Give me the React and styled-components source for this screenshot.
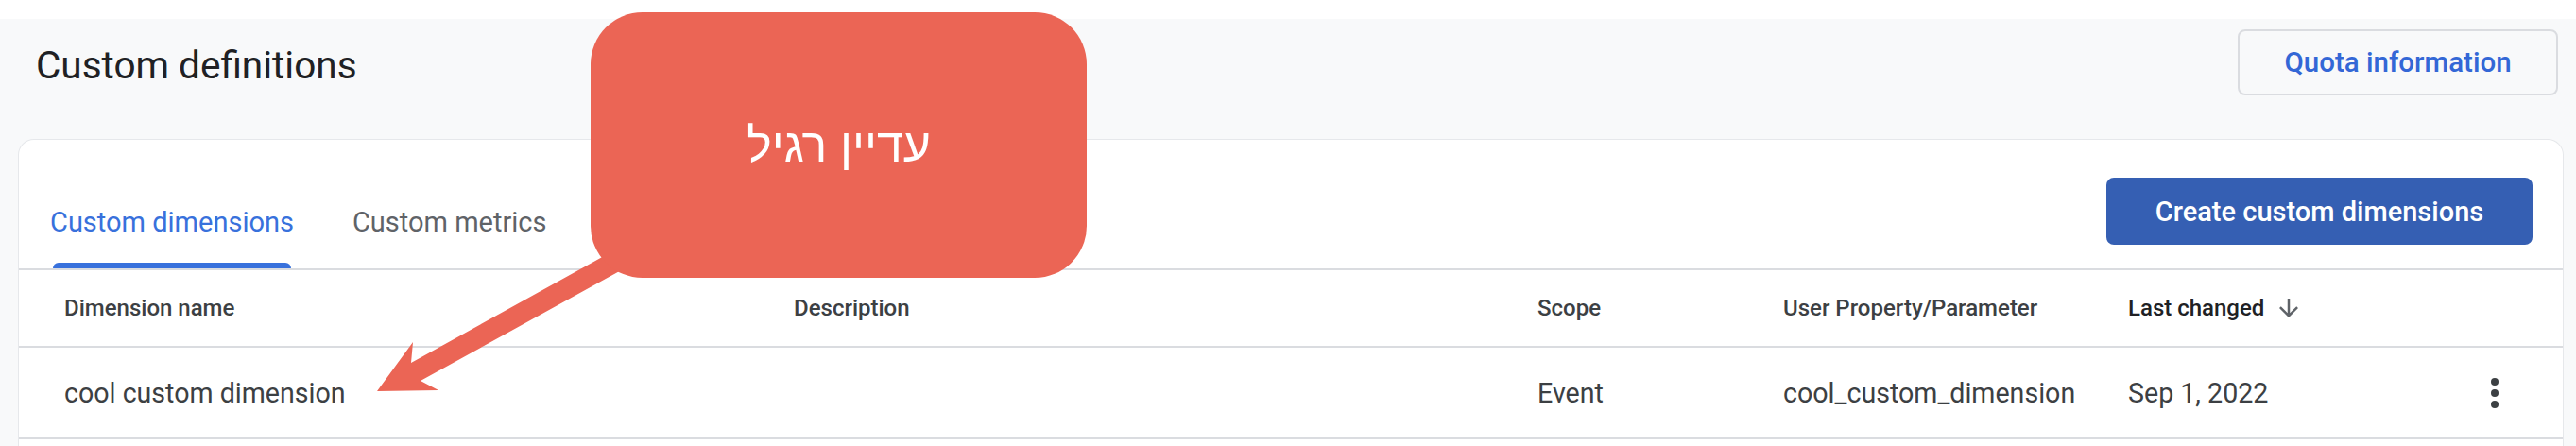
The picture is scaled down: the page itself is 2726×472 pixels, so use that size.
import React from 'react'
import styled, { createGlobalStyle } from 'styled-components'

const GlobalStyle = createGlobalStyle`
  html, body {
    margin: 0;
    padding: 0;
    background: #fff;
  }
  body {
    font-family: Roboto, 'Liberation Sans', sans-serif;
    overflow: hidden;
  }
`

const Root = styled.div`
  position: relative;
  padding-top: 20px;
`

const Page = styled.div`
  background: #f8f9fa;
  padding: 11px 14px 0 20px;
  height: 452px;
  box-sizing: border-box;
  overflow: hidden;
`

const Header = styled.div`
  display: flex;
  justify-content: space-between;
  align-items: flex-start;
  padding: 0 5px 0 18px;
  height: 70px;
  margin-bottom: 47px;
`

const Title = styled.h1`
  margin: 18px 0 0;
  font-size: 40.5px;
  line-height: 40px;
  font-weight: 400;
  color: #202124;
`

const OutlineButton = styled.button`
  width: 339px;
  height: 70px;
  box-sizing: border-box;
  border: 2px solid #dadce0;
  border-radius: 8px;
  background: transparent;
  color: #3367d6;
  font-family: Roboto, sans-serif;
  font-size: 29.5px;
  font-weight: 500;
  display: flex;
  align-items: center;
  justify-content: center;
`

const Card = styled.div`
  background: #fff;
  border-radius: 16px;
  box-shadow: 0 0 0 1px #e6e8eb;
  height: 400px;
`

const Toolbar = styled.div`
  display: flex;
  justify-content: space-between;
  align-items: flex-start;
  height: 136px;
  padding: 0 32px 0 33px;
  border-bottom: 2px solid #dadce0;
`

const Tabs = styled.div`
  display: flex;
  align-items: flex-end;
  gap: 62px;
  height: 100%;
`

const Tab = styled.div`
  display: flex;
  flex-direction: column;
`

const TabLabel = styled.span`
  font-size: 29px;
  line-height: 40px;
  color: ${p => (p.$active ? '#3871dc' : '#5f6368')};
  white-space: nowrap;
`

const Indicator = styled.div`
  height: 6px;
  margin: 23px 3px 0;
  border-radius: 6px 6px 0 0;
  background: ${p => (p.$active ? '#3871dc' : 'transparent')};
`

const PrimaryButton = styled.button`
  margin-top: 40px;
  width: 451px;
  height: 71px;
  border: none;
  border-radius: 8px;
  background: #355fb3;
  color: #fff;
  font-family: Roboto, sans-serif;
  font-size: 29px;
  font-weight: 500;
`

const Row = styled.div`
  display: grid;
  grid-template-columns: 772px 787px 260px 365px 1fr 80px;
  align-items: center;
  height: ${p => p.$h}px;
  padding: 0 32px 0 48px;
  border-bottom: 2px solid #dadce0;
`

const HeadCell = styled.div`
  display: flex;
  align-items: center;
  font-size: 24px;
  font-weight: 500;
  color: ${p => (p.$active ? '#202124' : '#3c4043')};
  white-space: nowrap;
`

const Cell = styled.div`
  font-size: 28.6px;
  color: #3c4043;
  white-space: nowrap;
`

const SortIcon = styled.svg`
  width: 30px;
  height: 30px;
  margin-left: 11px;
  fill: #5f6368;
`

const Kebab = styled.svg`
  justify-self: center;
  width: 48px;
  height: 48px;
  fill: #3c4043;
`

const Callout = styled.div`
  position: absolute;
  left: 625px;
  top: 13px;
  width: 525px;
  height: 281px;
  border-radius: 55px;
  background: #eb6555;
  display: flex;
  align-items: center;
  justify-content: center;
  color: #fff;
  font-family: 'Liberation Sans', 'DejaVu Sans', sans-serif;
  font-size: 50px;
  direction: rtl;
`

const Arrow = styled.svg`
  position: absolute;
  left: 380px;
  top: 260px;
  width: 300px;
  height: 170px;
`

const columns = ['Dimension name', 'Description', 'Scope', 'User Property/Parameter']

export default function App() {
  return (
    <Root>
      <GlobalStyle />
      <Page>
        <Header>
          <Title>Custom definitions</Title>
          <OutlineButton>Quota information</OutlineButton>
        </Header>
        <Card>
          <Toolbar>
            <Tabs>
              <Tab>
                <TabLabel $active>Custom dimensions</TabLabel>
                <Indicator $active />
              </Tab>
              <Tab>
                <TabLabel>Custom metrics</TabLabel>
                <Indicator />
              </Tab>
            </Tabs>
            <PrimaryButton>Create custom dimensions</PrimaryButton>
          </Toolbar>
          <Row $h={80}>
            {columns.map(c => (
              <HeadCell key={c}>{c}</HeadCell>
            ))}
            <HeadCell $active>
              Last changed
              <SortIcon viewBox="0 0 24 24">
                <path d="M20 12l-1.41-1.41L13 16.17V4h-2v12.17l-5.58-5.59L4 12l8 8 8-8z" />
              </SortIcon>
            </HeadCell>
            <div />
          </Row>
          <Row $h={95}>
            <Cell>cool custom dimension</Cell>
            <Cell />
            <Cell>Event</Cell>
            <Cell>cool_custom_dimension</Cell>
            <Cell>Sep 1, 2022</Cell>
            <Kebab viewBox="0 0 24 24">
              <circle cx="12" cy="6" r="2" />
              <circle cx="12" cy="12" r="2" />
              <circle cx="12" cy="18" r="2" />
            </Kebab>
          </Row>
        </Card>
      </Page>
      <Arrow viewBox="0 0 300 170">
        <polygon
          points="19,154 57,102 55,124 270,5 290,19 65,143 84,153"
          fill="#eb6555"
        />
      </Arrow>
      <Callout>עדיין רגיל</Callout>
    </Root>
  )
}
